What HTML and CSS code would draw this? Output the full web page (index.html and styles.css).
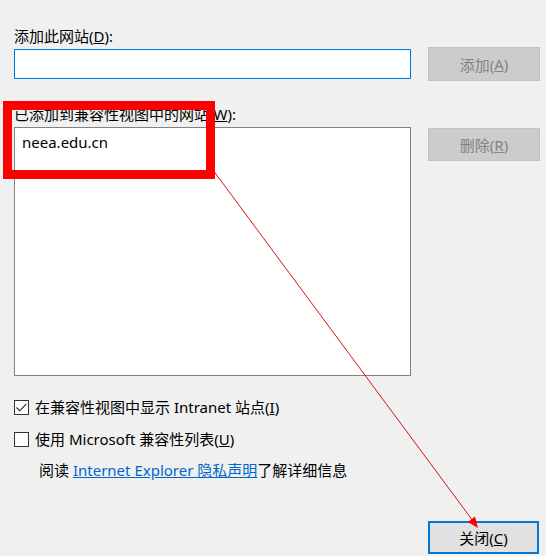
FILE: index.html
```html
<!DOCTYPE html>
<html lang="zh-CN">
<head>
<meta charset="utf-8">
<title>兼容性视图设置</title>
<link rel="stylesheet" href="styles.css">
</head>
<body>
<div class="dialog">
  <div class="label label-add">添加此网站(<u>D</u>):</div>
  <div class="row row-add">
    <div class="textbox"></div>
    <div class="btn btn-disabled">添加(<u>A</u>)</div>
  </div>
  <div class="label label-list">已添加到兼容性视图中的网站(<u>W</u>):</div>
  <div class="row row-list">
    <div class="listbox"><div class="item">neea.edu.cn</div></div>
    <div class="btn btn-disabled btn-del">删除(<u>R</u>)</div>
  </div>
  <div class="check check-first">
    <span class="box"><svg viewBox="0 0 15 15" width="15" height="15"><path d="M2.5 7.5 L5.8 10.8 L12.3 3.8" fill="none" stroke="#222" stroke-width="1.1"/></svg></span>
    <span>在兼容性视图中显示 Intranet 站点(<u>I</u>)</span>
  </div>
  <div class="check check-second">
    <span class="box"></span>
    <span>使用 Microsoft 兼容性列表(<u>U</u>)</span>
  </div>
  <div class="info">阅读 <a class="link" href="#">Internet Explorer 隐私声明</a>了解详细信息</div>
  <div class="footer">
    <div class="btn btn-close">关闭(<u>C</u>)</div>
  </div>
</div>
<svg class="annot" width="546" height="556" viewBox="0 0 546 556">
  <rect x="7.5" y="105.5" width="203" height="69" fill="none" stroke="#ff0000" stroke-width="9"/>
  <line x1="210" y1="166" x2="473" y2="521" stroke="#e01010" stroke-width="1"/>
  <polygon points="478,528 467.8,521.9 475,516.5" fill="#ff0000"/>
</svg>
</body>
</html>
```

FILE: styles.css
```css
html, body {
  margin: 0;
  padding: 0;
}
body {
  background: #f0f0f0;
  width: 546px;
  height: 556px;
  overflow: hidden;
  position: relative;
  font-family: "Noto Sans", "Noto Sans CJK SC", sans-serif;
  font-size: 15px;
  color: #000;
}
.dialog {
  display: flex;
  flex-direction: column;
  padding-left: 14px;
}
.label {
  height: 20px;
  line-height: 20px;
  white-space: nowrap;
}
.label-add { margin-top: 26px; }
.label-list { margin-top: 23px; }
.row {
  display: flex;
  gap: 17px;
}
.row-add {
  margin-top: 1px;
  align-items: center;
}
.row-list {
  margin-top: 3px;
  align-items: flex-start;
}
.textbox {
  width: 397px;
  height: 30px;
  box-sizing: border-box;
  background: #fff;
  border: 1px solid #0078d7;
}
.listbox {
  width: 397px;
  height: 249px;
  box-sizing: border-box;
  background: #fff;
  border: 1px solid #828282;
  padding: 3px 0 0 7px;
}
.item {
  line-height: 22px;
  font-size: 15px;
}
.btn {
  width: 112px;
  height: 34px;
  box-sizing: border-box;
  display: flex;
  align-items: center;
  justify-content: center;
  white-space: nowrap;
}
.btn-disabled {
  background: #cccccc;
  border: 1px solid #c2c2c2;
  color: #838383;
}
.btn-del {
  height: 33px;
  margin-top: 1px;
}
.check {
  display: flex;
  align-items: center;
  gap: 6px;
  height: 20px;
  line-height: 20px;
  white-space: nowrap;
}
.check-first { margin-top: 21px; }
.check-second { margin-top: 12px; }
.box {
  width: 15px;
  height: 15px;
  box-sizing: border-box;
  border: 1px solid #333;
  background: #fff;
  display: block;
  position: relative;
}
.box svg {
  position: absolute;
  left: -1px;
  top: -1px;
}
.info {
  margin-top: 11px;
  height: 20px;
  line-height: 20px;
  padding-left: 25px;
  white-space: nowrap;
}
.link {
  color: #0066cc;
  text-decoration: underline;
}
.footer {
  display: flex;
  justify-content: flex-end;
  margin-top: 41px;
  padding-right: 7px;
}
.btn-close {
  width: 111px;
  height: 33px;
  background: #e1e1e1;
  border: 2px solid #0078d7;
  color: #000;
}
.annot {
  position: absolute;
  left: 0;
  top: 0;
  pointer-events: none;
}
```
